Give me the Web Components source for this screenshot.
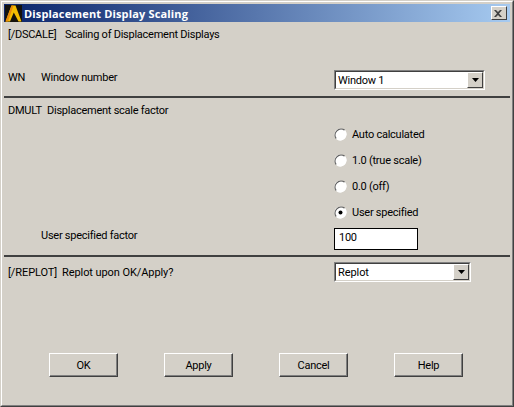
<!DOCTYPE html>
<html>
<head>
<meta charset="utf-8">
<title>Displacement Display Scaling</title>
<style>
  html, body { margin: 0; padding: 0; background: #d4d0c8; }
  body { font: 11px Roboto, "Liberation Sans", sans-serif; letter-spacing: -.25px; color: #000; }
</style>
</head>
<body>

<win-dialog caption="Displacement Display Scaling">
  <form-row height="20" top="2" label-top="4" code="[/DSCALE]" code-width="57">Scaling of Displacement Displays</form-row>
  <form-row height="20" top="26" label-top="1" code="WN" code-width="33">
    Window number
    <win-select slot="control" value="Window 1" width="151"></win-select>
  </form-row>
  <win-sep top="6"></win-sep>
  <form-row height="20" top="2" label-top="4" code="DMULT" code-width="39">Displacement scale factor</form-row>
  <radio-group>
    <win-radio>Auto calculated</win-radio>
    <win-radio>1.0 (true scale)</win-radio>
    <win-radio>0.0 (off)</win-radio>
    <win-radio checked>User specified</win-radio>
  </radio-group>
  <form-row height="22" top="3" label-top="1" code="" code-width="33">
    User specified factor
    <win-input slot="control" value="100"></win-input>
  </form-row>
  <win-sep top="5"></win-sep>
  <form-row style="letter-spacing: -.08px" height="20" top="5" label-top="4" code="[/REPLOT]" code-width="54">
    Replot upon OK/Apply?
    <win-select slot="control" value="Replot" width="137"></win-select>
  </form-row>
  <button-bar>
    <win-button>OK</win-button>
    <win-button>Apply</win-button>
    <win-button>Cancel</win-button>
    <win-button>Help</win-button>
  </button-bar>
</win-dialog>

<script>
class WinDialog extends HTMLElement {
    connectedCallback() {
        const caption = this.getAttribute('caption') ?? '';
        this.attachShadow({ mode: 'open' }).innerHTML = `
            <style>
                :host {
                    display: block;
                    box-sizing: border-box;
                    width: 514px;
                    height: 407px;
                    background: #d4d0c8;
                    border: 1px solid;
                    border-color: #d4d0c8 #404040 #404040 #d4d0c8;
                }
                .inner {
                    box-sizing: border-box;
                    height: 100%;
                    border: 1px solid;
                    border-color: #fff #808080 #808080 #fff;
                    padding: 2px;
                    display: flex;
                    flex-direction: column;
                }
                .title {
                    flex: none;
                    height: 18px;
                    display: flex;
                    align-items: center;
                    background: linear-gradient(90deg, #0a246a, #a6caf0);
                    color: #fff;
                    font: 700 11px "Open Sans", sans-serif;
                    letter-spacing: .15px;
                    padding-right: 3px;
                }
                .title svg { flex: none; margin-right: 2px; }
                .title span { flex: 1; white-space: nowrap; }
                .close {
                    box-sizing: border-box;
                    width: 16px;
                    height: 14px;
                    background: #d4d0c8;
                    border: 1px solid;
                    border-color: #fff #404040 #404040 #fff;
                    display: flex;
                    align-items: center;
                    justify-content: center;
                }
            </style>
            <div class="inner">
                <div class="title">
                    <svg width="18" height="18" viewBox="0 0 18 18">
                        <rect x="1" y="1" width="17" height="17" fill="#14120c"/>
                        <path d="M1.5 17.5 L7.5 1.5 H11.5 L17.5 17.5 H14.5 L9.8 8.5 L6 17.5 Z" fill="#f5bd00"/>
                        <path d="M1.5 17.5 L7.5 1.5 H9.5 L4 17.5 Z" fill="#e8890a"/>
                    </svg>
                    <span>${caption}</span>
                    <div class="close">
                        <svg width="8" height="7" viewBox="0 0 8 7"><path d="M0 0 L2 0 L4 2 L6 0 L8 0 L5 3.5 L8 7 L6 7 L4 5 L2 7 L0 7 L3 3.5 Z" fill="#404040"/></svg>
                    </div>
                </div>
                <slot></slot>
            </div>
        `;
    }
}

class FormRow extends HTMLElement {
    connectedCallback() {
        const height = this.getAttribute('height') ?? '20';
        const top = this.getAttribute('top') ?? '0';
        const labelTop = this.getAttribute('label-top') ?? '0';
        const code = this.getAttribute('code') ?? '';
        const codeWidth = this.getAttribute('code-width') ?? '33';
        this.attachShadow({ mode: 'open' }).innerHTML = `
            <style>
                :host {
                    display: grid;
                    grid-template-columns: 330px 1fr;
                    align-items: start;
                    height: ${height}px;
                    margin-top: ${top}px;
                }
                .label {
                    display: flex;
                    padding: ${labelTop}px 0 0 4px;
                    line-height: 14px;
                    white-space: nowrap;
                }
                .code { flex: none; width: ${codeWidth}px; }
            </style>
            <div class="label"><span class="code">${code}</span><span><slot></slot></span></div>
            <div><slot name="control"></slot></div>
        `;
    }
}

class WinSep extends HTMLElement {
    connectedCallback() {
        const top = this.getAttribute('top') ?? '0';
        this.attachShadow({ mode: 'open' }).innerHTML = `
            <style>
                :host {
                    display: block;
                    height: 2px;
                    margin-top: ${top}px;
                    background: #404040;
                }
            </style>
        `;
    }
}

class WinSelect extends HTMLElement {
    connectedCallback() {
        const value = this.getAttribute('value') ?? '';
        const width = this.getAttribute('width') ?? '150';
        this.attachShadow({ mode: 'open' }).innerHTML = `
            <style>
                :host {
                    display: block;
                    box-sizing: border-box;
                    width: ${width}px;
                    height: 20px;
                    border: 1px solid;
                    border-color: #808080 #fff #fff #808080;
                }
                .box {
                    box-sizing: border-box;
                    height: 100%;
                    border: 1px solid;
                    border-color: #404040 #d4d0c8 #d4d0c8 #404040;
                    background: #fff;
                    display: flex;
                    align-items: center;
                    justify-content: space-between;
                }
                .value { padding: 1px 0 0 2px; }
                .arrow {
                    box-sizing: border-box;
                    width: 16px;
                    height: 100%;
                    background: #d4d0c8;
                    border: 1px solid;
                    border-color: #fff #404040 #404040 #fff;
                    display: flex;
                    align-items: center;
                    justify-content: center;
                }
            </style>
            <div class="box">
                <span class="value">${value}</span>
                <div class="arrow">
                    <svg width="7" height="4" viewBox="0 0 7 4"><path d="M0 0 H7 L3.5 4 Z" fill="#000"/></svg>
                </div>
            </div>
        `;
    }
}

class WinInput extends HTMLElement {
    connectedCallback() {
        const value = this.getAttribute('value') ?? '';
        this.attachShadow({ mode: 'open' }).innerHTML = `
            <style>
                :host {
                    display: flex;
                    align-items: center;
                    box-sizing: border-box;
                    width: 84px;
                    height: 22px;
                    background: #fff;
                    border: 1px solid #000;
                    padding: 0 0 3px 4px;
                }
            </style>
            <span>${value}</span>
        `;
    }
}

class RadioGroup extends HTMLElement {
    connectedCallback() {
        this.attachShadow({ mode: 'open' }).innerHTML = `
            <style>
                :host {
                    display: grid;
                    grid-auto-rows: 26px;
                    padding-left: 330px;
                    margin-top: 1px;
                }
            </style>
            <slot></slot>
        `;
    }
}

class WinRadio extends HTMLElement {
    connectedCallback() {
        const dot = this.hasAttribute('checked')
            ? '<circle cx="6.5" cy="6.5" r="2" fill="#000"/>' : '';
        this.attachShadow({ mode: 'open' }).innerHTML = `
            <style>
                :host {
                    display: flex;
                    align-items: center;
                    gap: 5px;
                }
                svg { flex: none; }
            </style>
            <svg width="13" height="13" viewBox="0 0 13 13">
                <circle cx="6.5" cy="6.5" r="6" fill="#fff"/>
                <path d="M10.7 2.3 A6 6 0 0 0 2.3 10.7" fill="none" stroke="#606060" stroke-width="1.2"/>
                <path d="M2.3 10.7 A6 6 0 0 0 10.7 2.3" fill="none" stroke="#fff" stroke-width="1"/>
                ${dot}
            </svg>
            <span><slot></slot></span>
        `;
    }
}

class ButtonBar extends HTMLElement {
    connectedCallback() {
        this.attachShadow({ mode: 'open' }).innerHTML = `
            <style>
                :host {
                    display: flex;
                    gap: 46px;
                    padding-left: 45px;
                    margin-top: 71px;
                }
            </style>
            <slot></slot>
        `;
    }
}

class WinButton extends HTMLElement {
    connectedCallback() {
        this.attachShadow({ mode: 'open' }).innerHTML = `
            <style>
                :host {
                    display: flex;
                    align-items: center;
                    justify-content: center;
                    box-sizing: border-box;
                    width: 69px;
                    height: 24px;
                    background: #d4d0c8;
                    border: 1px solid;
                    border-color: #fff #404040 #404040 #fff;
                    box-shadow: inset -1px -1px 0 #808080;
                }
            </style>
            <span><slot></slot></span>
        `;
    }
}

customElements.define('win-dialog', WinDialog);
customElements.define('form-row', FormRow);
customElements.define('win-sep', WinSep);
customElements.define('win-select', WinSelect);
customElements.define('win-input', WinInput);
customElements.define('radio-group', RadioGroup);
customElements.define('win-radio', WinRadio);
customElements.define('button-bar', ButtonBar);
customElements.define('win-button', WinButton);
</script>
</body>
</html>
